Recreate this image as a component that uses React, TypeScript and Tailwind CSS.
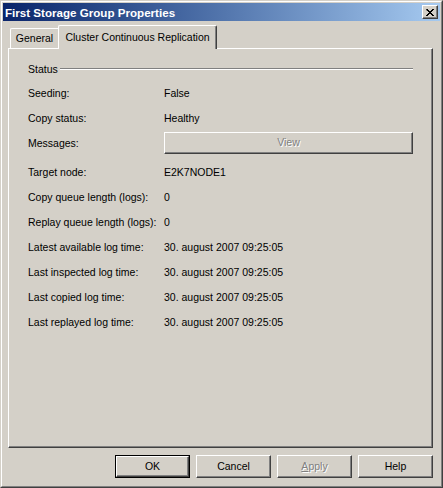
import React from "react";

const font = { fontFamily: '"Liberation Sans", Arial, sans-serif' };

function Row({ label, value, extra }: { label: string; value?: string; extra?: string }) {
  return (
    <div className={"flex h-[25px] items-center " + (extra || "")}>
      <div className="w-[136px] shrink-0">{label}</div>
      <div>{value}</div>
    </div>
  );
}

function Btn({ children, def, disabled }: { children: React.ReactNode; def?: boolean; disabled?: boolean }) {
  const inner = (
    <div className="flex h-full w-full items-center justify-center border-t border-l border-t-white border-l-white border-r border-b border-r-[#404040] border-b-[#404040] shadow-[inset_-1px_-1px_0_#808080]">
      <span className={disabled ? "text-[#808080] [text-shadow:1px_1px_0_#ffffff]" : "text-black"}>{children}</span>
    </div>
  );
  if (def) {
    return <div className="h-[23px] w-[75px] border border-black">{inner}</div>;
  }
  return <div className="h-[23px] w-[75px]">{inner}</div>;
}

export default function App() {
  return (
    <div className="w-[443px] h-[488px] bg-[#d4d0c8] text-[10.5px] leading-[13px] text-black" style={font}>
      <div className="h-full w-full border-t border-l border-t-[#d4d0c8] border-l-[#d4d0c8] border-r border-b border-r-[#404040] border-b-[#404040]">
        <div className="h-full w-full border-t border-l border-t-white border-l-white border-r border-b border-r-[#808080] border-b-[#808080] p-px">
          {/* Title bar */}
          <div className="flex h-[18px] items-center justify-between bg-gradient-to-r from-[#0a246a] to-[#a6caf0] pl-[2px] pr-[2px]">
            <span className="text-[11.6px] font-bold text-white">First Storage Group Properties</span>
            <div className="flex h-[14px] w-[16px] items-center justify-center bg-[#d4d0c8] border-t border-l border-t-white border-l-white border-r border-b border-r-[#404040] border-b-[#404040] shadow-[inset_-1px_-1px_0_#808080]">
              <svg width="8" height="7" viewBox="0 0 8 7">
                <path d="M0 0h2v1h1v1h2v-1h1v-1h2v1h-1v1h-1v1h-1v1h1v1h1v1h1v1h-2v-1h-1v-1h-2v1h-1v1h-2v-1h1v-1h1v-1h1v-1h-1v-1h-1z" fill="#000" />
              </svg>
            </div>
          </div>
          {/* Body */}
          <div className="pl-[5px] pr-[7px] pt-[4px]">
            {/* Tabs */}
            <div className="flex items-end">
              <div className="ml-[2px] flex h-[20px] w-[48px] items-center justify-center rounded-tl-[2px] border-t border-l border-t-white border-l-white">
                General
              </div>
              <div className="relative z-10 -mb-px flex h-[24px] w-[159px] items-start justify-center rounded-tl-[2px] rounded-tr-[2px] border-t border-l border-t-white border-l-white border-r border-r-[#404040] bg-[#d4d0c8] pt-[5px] shadow-[inset_-1px_0_0_#808080]">
                Cluster Continuous Replication
              </div>
            </div>
            {/* Panel */}
            <div className="h-[400px] w-[425px] border-t border-l border-t-white border-l-white border-r border-b border-r-[#404040] border-b-[#404040] shadow-[inset_-1px_-1px_0_#808080] pl-[19px] pr-[19px] pt-[8px]">
              <div className="flex h-[24px] items-center">
                <span>Status</span>
                <div className="ml-[2px] flex-1 border-t border-b border-t-[#808080] border-b-white" />
              </div>
              <Row label="Seeding:" value="False" />
              <Row label="Copy status:" value="Healthy" />
              <div className="flex h-[25px] items-center">
                <div className="w-[136px] shrink-0">Messages:</div>
                <div className="-mt-[2px] h-[22px] flex-1">
                  <div className="flex h-full w-full items-center justify-center border-t border-l border-t-white border-l-white border-r border-b border-r-[#404040] border-b-[#404040] shadow-[inset_-1px_-1px_0_#808080]">
                    <span className="text-[#808080] [text-shadow:1px_1px_0_#ffffff]">View</span>
                  </div>
                </div>
              </div>
              <Row label="Target node:" value="E2K7NODE1" extra="mt-[4px]" />
              <Row label="Copy queue length (logs):" value="0" />
              <Row label="Replay queue length (logs):" value="0" />
              <Row label="Latest available log time:" value="30. august 2007 09:25:05" />
              <Row label="Last inspected log time:" value="30. august 2007 09:25:05" />
              <Row label="Last copied log time:" value="30. august 2007 09:25:05" />
              <Row label="Last replayed log time:" value="30. august 2007 09:25:05" />
            </div>
            {/* Buttons */}
            <div className="mt-[7px] flex justify-end gap-[6px]">
              <Btn def>OK</Btn>
              <Btn>Cancel</Btn>
              <Btn disabled>
                <span className="underline">A</span>pply
              </Btn>
              <Btn>Help</Btn>
            </div>
          </div>
        </div>
      </div>
    </div>
  );
}
